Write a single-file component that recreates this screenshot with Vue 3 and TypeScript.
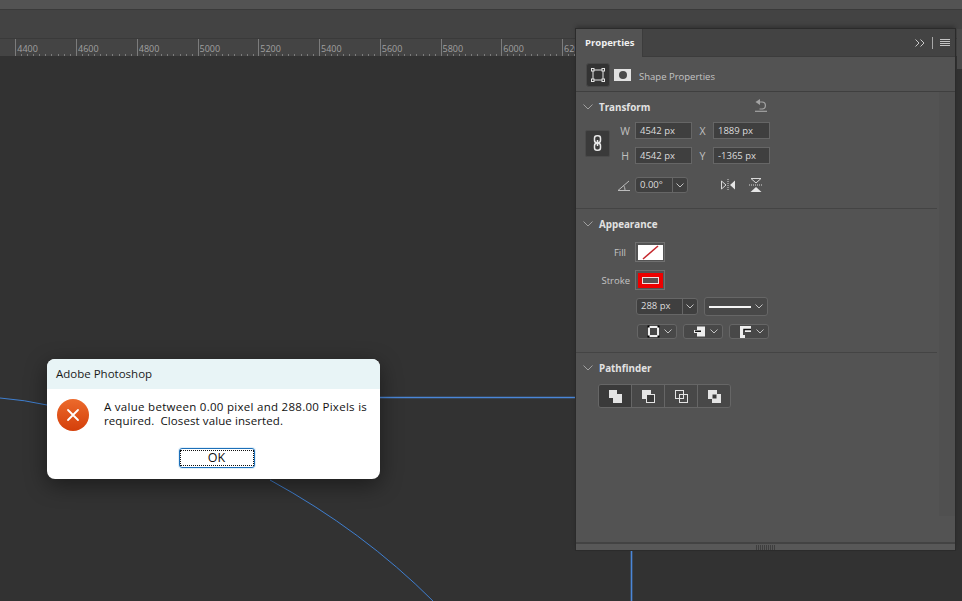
<template>
  <div class="workspace">
    <div class="top-strip"></div>
    <div class="options-bar"></div>
    <div class="ruler">
      <div v-for="mark in rulerMarks" :key="mark" class="ruler-cell">
        <span>{{ mark }}</span>
      </div>
    </div>

    <main class="canvas">
      <!-- paths on the document canvas -->
      <svg class="canvas-paths" width="962" height="601" viewBox="0 0 962 601" fill="none">
        <path d="M0 398 Q25 400 47 405" />
        <path d="M270 480 Q363 531 433 601" />
        <path class="straight" d="M380 397.500 H576" />
        <path class="straight" d="M631.500 550 V601" />
      </svg>
    </main>

    <aside class="panel">
      <header class="panel-tabs">
        <div class="tab">Properties</div>
        <div class="tab-rest">
          <svg width="10" height="8" viewBox="0 0 10 8" fill="none" stroke="#c8c8c8">
            <path d="M.5.5L4 4 .5 7.500M5.500.5L9 4 5.500 7.500" />
          </svg>
          <i class="tab-sep"></i>
          <span class="burger"><i></i><i></i><i></i><i></i></span>
        </div>
      </header>

      <div class="shape-row">
        <button class="shape-btn">
          <svg width="14" height="14" viewBox="0 0 14 14" fill="none" stroke="#e6e6e6">
            <rect x="2" y="2" width="10" height="10" />
            <rect x=".5" y=".5" width="2.500" height="2.500" fill="#333" />
            <rect x="11" y=".5" width="2.500" height="2.500" fill="#333" />
            <rect x=".5" y="11" width="2.500" height="2.500" fill="#333" />
            <rect x="11" y="11" width="2.500" height="2.500" fill="#333" />
          </svg>
        </button>
        <span class="mask-thumb"><i></i></span>
        <span class="shape-label">Shape Properties</span>
      </div>

      <div class="panel-body">
        <div class="sections">
          <section class="section transform">
            <div class="section-head">
              <svg class="chev" width="10" height="6" viewBox="0 0 10 6" fill="none"><path d="M.5.5L5 5 9.500.5" /></svg>
              <h3>Transform</h3>
              <svg class="reset" width="14" height="13" viewBox="0 0 14 13" fill="none" stroke="#a4a4a4" stroke-width="1.200">
                <path d="M6 0L1.500 3 6 6z" fill="#a4a4a4" stroke="none" />
                <path d="M5 3H8a3.500 3.500 0 0 1 3.400 3.500A3.500 3.500 0 0 1 8 10H5.500" />
                <path d="M1 12.300H13" />
              </svg>
            </div>
            <div class="transform-grid">
              <button class="link-btn">
                <svg width="9" height="16" viewBox="0 0 9 16" fill="none" stroke="#e8e8e8" stroke-width="1.500">
                  <rect x="1.500" y=".8" width="6" height="7" rx="2.500" />
                  <rect x="1.500" y="8.200" width="6" height="7" rx="2.500" />
                  <path d="M4.500 5v6" />
                </svg>
              </button>
              <div class="size-fields">
                <template v-for="field in sizeFields" :key="field.label">
                  <label>{{ field.label }}</label>
                  <span class="input">{{ field.value }}</span>
                </template>
              </div>
            </div>
            <div class="angle-row">
              <svg class="angle-icon" width="14" height="11" viewBox="0 0 14 11" fill="none" stroke="#bcbcbc">
                <path d="M13 10.500H1L12 1M8 10.500C8 8.500 7.500 6.500 6.500 5.500" />
              </svg>
              <span class="combo angle-combo"><span class="combo-text">0.00°</span><span class="combo-arrow"><svg class="chev small" width="8" height="5" viewBox="0 0 8 5" fill="none"><path d="M.5.5L4 4 7.500.5" /></svg></span></span>
              <svg class="flip-h" width="16" height="12" viewBox="0 0 16 12">
                <path d="M1.500 2L6 6l-4.500 4z" fill="none" stroke="#d8d8d8" />
                <path d="M15 1.500v9L10 6z" fill="#e6e6e6" />
                <path d="M8 0v12" stroke="#d8d8d8" stroke-dasharray="1 1" />
              </svg>
              <svg class="flip-v" width="14" height="16" viewBox="0 0 14 16">
                <path d="M2 1.500h10L7 6z" fill="none" stroke="#d8d8d8" />
                <path d="M1.500 15h11L7 10z" fill="#e6e6e6" />
                <path d="M0 8h14" stroke="#d8d8d8" stroke-dasharray="1 1" />
              </svg>
            </div>
          </section>

          <section class="section appearance">
            <div class="section-head">
              <svg class="chev" width="10" height="6" viewBox="0 0 10 6" fill="none"><path d="M.5.5L5 5 9.500.5" /></svg>
              <h3>Appearance</h3>
            </div>
            <div class="swatch-row">
              <label class="fill-label">Fill</label>
              <span class="swatch-frame">
                <svg width="25" height="15" viewBox="0 0 25 15"><rect width="25" height="15" fill="#fff" /><path d="M5 14L20 1" stroke="#c4262c" stroke-width="1.500" /></svg>
              </span>
            </div>
            <div class="swatch-row">
              <label>Stroke</label>
              <span class="swatch-frame">
                <svg width="25" height="15" viewBox="0 0 25 15"><rect width="25" height="15" fill="#ed0000" /><rect x="4.500" y="4.500" width="16" height="6" fill="#5a5050" stroke="#f0e0e0" /></svg>
              </span>
            </div>
            <div class="stroke-row">
              <span class="combo width-combo"><span class="combo-text">288 px</span><span class="combo-arrow"><svg class="chev small" width="8" height="5" viewBox="0 0 8 5" fill="none"><path d="M.5.5L4 4 7.500.5" /></svg></span></span>
              <span class="combo line-combo"><i class="line-sample"></i><svg class="chev small" width="8" height="5" viewBox="0 0 8 5" fill="none"><path d="M.5.5L4 4 7.500.5" /></svg></span>
            </div>
            <div class="align-row">
              <span class="mini-combo">
                <svg width="13" height="13" viewBox="0 0 13 13" fill="none" stroke="#f0f0f0"><rect x="2" y="2" width="9" height="9" stroke-width="2" /><rect x=".5" y=".5" width="2" height="2" fill="#000" stroke="none" /><rect x="10.500" y=".5" width="2" height="2" fill="#000" stroke="none" /><rect x=".5" y="10.500" width="2" height="2" fill="#000" stroke="none" /><rect x="10.500" y="10.500" width="2" height="2" fill="#000" stroke="none" /></svg>
                <svg class="chev small" width="8" height="5" viewBox="0 0 8 5" fill="none"><path d="M.5.5L4 4 7.500.5" /></svg>
              </span>
              <span class="mini-combo">
                <svg width="13" height="13" viewBox="0 0 13 13"><path d="M4 1.500h8v10H4V8H1V5h3z" fill="#eee" /><rect x="2" y="5.500" width="6" height="1.500" fill="#111" /></svg>
                <svg class="chev small" width="8" height="5" viewBox="0 0 8 5" fill="none"><path d="M.5.5L4 4 7.500.5" /></svg>
              </span>
              <span class="mini-combo">
                <svg width="13" height="13" viewBox="0 0 13 13"><path d="M1 1h11v6H6v6H1z" fill="#eee" /><path d="M12 4.500H5V10" fill="none" stroke="#111" stroke-width="1.500" /></svg>
                <svg class="chev small" width="8" height="5" viewBox="0 0 8 5" fill="none"><path d="M.5.5L4 4 7.500.5" /></svg>
              </span>
            </div>
          </section>

          <section class="section pathfinder">
            <div class="section-head">
              <svg class="chev" width="10" height="6" viewBox="0 0 10 6" fill="none"><path d="M.5.5L5 5 9.500.5" /></svg>
              <h3>Pathfinder</h3>
            </div>
            <div class="path-group">
              <button class="path-btn">
                <svg width="15" height="15" viewBox="0 0 15 15"><path d="M1 1h8v4h5v9H5V9H1z" fill="#e4e4e4" /></svg>
              </button>
              <button class="path-btn">
                <svg width="15" height="15" viewBox="0 0 15 15"><rect x="1" y="1" width="9" height="9" fill="#e4e4e4" /><rect x="5.500" y="5.500" width="8" height="8" fill="#3a3a3a" stroke="#e4e4e4" /></svg>
              </button>
              <button class="path-btn">
                <svg width="15" height="15" viewBox="0 0 15 15" fill="none" stroke="#e4e4e4"><rect x="1.500" y="1.500" width="8" height="8" /><rect x="5.500" y="5.500" width="8" height="8" /></svg>
              </button>
              <button class="path-btn">
                <svg width="15" height="15" viewBox="0 0 15 15"><path d="M1 1h9v4h4v9H5v-4H1z" fill="#e4e4e4" /><rect x="5.500" y="5.500" width="4" height="4" fill="#3a3a3a" /></svg>
              </button>
            </div>
          </section>
        </div>
        <div class="scroll-track"><div class="scroll-thumb"></div></div>
      </div>

      <footer class="panel-foot">
        <span class="gripper"></span>
      </footer>
    </aside>

    <div class="dock-edge"></div>

    <div class="dialog" role="alertdialog">
      <div class="dialog-title">Adobe Photoshop</div>
      <div class="dialog-body">
        <span class="error-icon">
          <svg width="14" height="14" viewBox="0 0 14 14" fill="none" stroke="#fff" stroke-width="1.800" stroke-linecap="round">
            <path d="M2 2l10 10M12 2L2 12" />
          </svg>
        </span>
        <p>
          <span class="line-one">A value between 0.00 pixel and 288.00 Pixels is</span>
          <span class="line-two">required.&nbsp; Closest value inserted.</span>
        </p>
      </div>
      <div class="dialog-actions">
        <button class="ok-btn"><span>OK</span></button>
      </div>
    </div>
  </div>
</template>

<script setup lang="ts">
interface SizeField {
  label: string
  value: string
}

const rulerMarks: string[] = ['4400', '4600', '4800', '5000', '5200', '5400', '5600', '5800', '6000', '6200']

const sizeFields: SizeField[] = [
  { label: 'W', value: '4542 px' },
  { label: 'X', value: '1889 px' },
  { label: 'H', value: '4542 px' },
  { label: 'Y', value: '-1365 px' }
]
</script>

<style>
html,
body {
  margin: 0;
  background: #323232;
  overflow: hidden;
}
</style>

<style scoped>
.workspace {
  position: relative;
  display: flex;
  flex-direction: column;
  width: 962px;
  height: 601px;
  overflow: hidden;
  background: #323232;
  font-family: "Open Sans", "Noto Sans", sans-serif;
}

.top-strip {
  height: 9px;
  background: #535353;
  border-bottom: 1px solid #3a3a3a;
}

.options-bar {
  height: 28px;
  background: #434343;
  border-bottom: 1px solid #3a3a3a;
}

/* ========= ruler ========= */
.ruler {
  display: flex;
  height: 17px;
  padding-left: 15.300px;
  background: #444444;
  overflow: hidden;
}

.ruler-cell {
  flex: 0 0 60.750px;
  box-sizing: border-box;
  padding-left: 1px;
  border-left: 1px solid #7c7c7c;
  font-size: 9px;
  color: #a0a0a0;
  background:
    repeating-linear-gradient(90deg, transparent 0, transparent 5.080px, #7c7c7c 5.080px, #7c7c7c 6.080px) bottom left / 100% 2px no-repeat;
}

.ruler-cell:last-child {
  flex-basis: 14px;
}

.ruler-cell span {
  display: block;
  height: 17px;
  line-height: 19px;
  overflow: hidden;
  white-space: nowrap;
}

.canvas {
  flex: 1;
}

.canvas-paths {
  position: absolute;
  inset: 0;
  stroke: #3f7fd0;
  stroke-width: 1;
}

.canvas-paths .straight {
  stroke: #4a86d8;
  stroke-width: 1.600;
}

/* ========= panel ========= */
.panel {
  position: absolute;
  top: 29px;
  left: 576px;
  width: 379px;
  height: 521px;
  display: flex;
  flex-direction: column;
  background: #535353;
  box-shadow: 0 0 0 1px #2b2b2b, 0 -3px 4px rgba(0, 0, 0, 0.25);
  font-size: 9.500px;
  color: #c6c6c6;
}

.panel-tabs {
  display: flex;
  height: 28px;
  flex-shrink: 0;
}

.tab {
  width: 66px;
  padding-left: 9px;
  box-sizing: border-box;
  line-height: 27px;
  font-weight: 700;
  font-size: 9.500px;
  color: #f0f0f0;
  background: #535353;
}

.tab-rest {
  flex: 1;
  display: flex;
  align-items: center;
  justify-content: flex-end;
  gap: 7px;
  padding-right: 5px;
  background: #434343;
  border-bottom: 1px solid #3c3c3c;
  border-left: 1px solid #3c3c3c;
}

.tab-sep {
  width: 1px;
  height: 12px;
  background: #a8a8a8;
}

.burger {
  display: flex;
  flex-direction: column;
  gap: 1px;
  width: 10px;
}

.burger i {
  height: 1px;
  background: #c4c4c4;
}

.shape-row {
  display: flex;
  align-items: center;
  height: 35px;
  padding: 1px 0 0 10px;
  flex-shrink: 0;
  border-bottom: 1px solid #3f3f3f;
  box-sizing: border-box;
}

.shape-btn {
  display: flex;
  align-items: center;
  justify-content: center;
  width: 24px;
  height: 24px;
  padding: 0;
  background: #333333;
  border: 1px solid #484848;
  border-radius: 3px;
}

.mask-thumb {
  display: flex;
  align-items: center;
  justify-content: center;
  width: 17px;
  height: 12px;
  margin-left: 4px;
  background: #e2e2e2;
}

.mask-thumb i {
  width: 8px;
  height: 8px;
  border-radius: 50%;
  background: #4a4a4a;
}

.shape-label {
  margin: 3px 0 0 8px;
  color: #c4c4c4;
}

.panel-body {
  flex: 1;
  display: flex;
  min-height: 0;
}

.sections {
  width: 361px;
  flex-shrink: 0;
}

.scroll-track {
  flex: 1;
  margin-left: 2px;
}

.scroll-thumb {
  height: 424px;
  background: #505050;
}

.section {
  box-sizing: border-box;
  border-bottom: 1px solid #444444;
}

.section.pathfinder {
  border-bottom: 0;
}

.section.transform {
  height: 117px;
}

.section.appearance {
  height: 144px;
}

.section-head {
  display: flex;
  align-items: center;
  height: 30px;
  padding-left: 7px;
}

.appearance .section-head {
  margin-bottom: 3px;
}

.section-head h3 {
  margin: 0 0 0 6px;
  font-size: 9.800px;
  font-weight: 700;
  color: #e2e2e2;
}

.chev {
  stroke: #a0a0a0;
  flex-shrink: 0;
}

.reset {
  margin-left: 104px;
  margin-top: -4px;
}

.transform-grid {
  display: flex;
  align-items: center;
  height: 42px;
  padding-left: 9px;
}

.link-btn {
  display: flex;
  align-items: center;
  justify-content: center;
  width: 25px;
  height: 27px;
  padding: 0;
  background: #3a3a3a;
  border: 1px solid #4a4a4a;
  border-radius: 2px;
}

.size-fields {
  display: grid;
  grid-template-columns: 20px 57px 21px 57px;
  grid-auto-rows: 17px;
  row-gap: 8px;
  margin-left: 5px;
  align-items: center;
}

.size-fields label {
  color: #c0c0c0;
  font-size: 10.500px;
  text-align: center;
}

.input {
  display: block;
  box-sizing: border-box;
  height: 17px;
  padding-left: 4px;
  line-height: 15px;
  background: #3f3f3f;
  border: 1px solid #666666;
  color: #dcdcdc;
}

.angle-row {
  display: flex;
  align-items: center;
  height: 16px;
  margin-top: 13px;
  padding-left: 41px;
}

.combo {
  display: flex;
  align-items: center;
  box-sizing: border-box;
  height: 16px;
  background: #3f3f3f;
  border: 1px solid #666666;
  border-radius: 3px;
  color: #dcdcdc;
}

.combo-text {
  flex: 1;
  height: 100%;
  padding-left: 4px;
  line-height: 14px;
  border-right: 1px solid #666666;
}

.combo-arrow {
  display: flex;
  align-items: center;
  justify-content: center;
  width: 14px;
}

.chev.small {
  stroke: #c2c2c2;
}

.angle-combo {
  width: 53px;
  margin-left: 4px;
}

.flip-h {
  margin-left: 32px;
}

.flip-v {
  margin-left: 13px;
}

.swatch-row {
  display: flex;
  align-items: center;
  height: 20px;
  margin-bottom: 8px;
}

.swatch-row label {
  flex: 0 0 54px;
  text-align: right;
  color: #c4c4c4;
}

.swatch-row .fill-label {
  padding-right: 4px;
  box-sizing: border-box;
}

.swatch-frame {
  display: flex;
  align-items: center;
  justify-content: center;
  width: 30px;
  height: 20px;
  margin-left: 5px;
  border: 1px solid #707070;
  box-sizing: border-box;
}

.stroke-row {
  display: flex;
  align-items: center;
  gap: 6px;
  padding-left: 60px;
  margin-top: -1px;
}

.width-combo {
  width: 62px;
  height: 17px;
}

.line-combo {
  width: 64px;
  height: 19px;
  padding: 0 4px;
  gap: 4px;
  background: #484848;
}

.line-sample {
  flex: 1;
  height: 2px;
  background: #f4f4f4;
}

.align-row {
  display: flex;
  gap: 6px;
  padding-left: 61px;
  margin-top: 8px;
}

.mini-combo {
  display: flex;
  align-items: center;
  justify-content: space-between;
  box-sizing: border-box;
  width: 40px;
  height: 15px;
  padding: 0 4px 0 9px;
  background: #484848;
  border: 1px solid #666666;
  border-radius: 3px;
}

.path-group {
  display: flex;
  box-sizing: border-box;
  width: 133px;
  height: 24px;
  margin: 1px 0 0 22px;
  border: 1px solid #666666;
  border-radius: 3px;
  overflow: hidden;
}

.path-btn {
  flex: 1;
  display: flex;
  align-items: center;
  justify-content: center;
  padding: 0;
  border: 0;
  border-left: 1px solid #666666;
  background: #484848;
}

.path-btn:first-child {
  border-left: 0;
  background: #3a3a3a;
}

.panel-foot {
  display: flex;
  justify-content: center;
  align-items: center;
  height: 8px;
  flex-shrink: 0;
  background: #585858;
  border-top: 2px solid #434343;
  box-sizing: border-box;
}

.gripper {
  width: 19px;
  height: 5px;
  background: repeating-linear-gradient(90deg, #3e3e3e 0, #3e3e3e 1px, transparent 1px, transparent 2px);
}

.dock-edge {
  position: absolute;
  top: 29px;
  right: 0;
  width: 5px;
  height: 40px;
  background: #4a4a4a;
}

/* ========= dialog ========= */
.dialog {
  position: absolute;
  top: 359px;
  left: 47px;
  width: 333px;
  height: 120px;
  display: flex;
  flex-direction: column;
  border-radius: 8px;
  background: #ffffff;
  overflow: hidden;
  box-shadow: 0 6px 22px rgba(0, 0, 0, 0.45);
  color: #111111;
}

.dialog-title {
  height: 30px;
  padding-left: 9px;
  line-height: 30px;
  font-size: 11.500px;
  background: #e8f4f6;
  color: #1a1a1a;
}

.dialog-body {
  display: flex;
  align-items: flex-start;
  height: 53px;
  padding: 10px 0 0 10px;
  box-sizing: border-box;
}

.error-icon {
  display: flex;
  align-items: center;
  justify-content: center;
  width: 32px;
  height: 32px;
  flex-shrink: 0;
  border-radius: 50%;
  background: linear-gradient(180deg, #ec6a2c, #d43f0a);
}

.dialog-body p {
  margin: 0 0 0 15px;
  padding-top: 1px;
  font-size: 11.500px;
  line-height: 14px;
  white-space: nowrap;
}

.dialog-body p span {
  display: block;
}

.line-one {
  letter-spacing: 0.285px;
}

.line-two {
  letter-spacing: 0.1px;
}

.dialog-actions {
  display: flex;
  justify-content: center;
  padding-top: 6px;
}

.ok-btn {
  display: flex;
  align-items: center;
  justify-content: center;
  box-sizing: border-box;
  width: 76px;
  height: 20px;
  margin-left: 6px;
  padding: 1px;
  background: #ffffff;
  border: 1px solid #1d6fb8;
  border-radius: 3px;
  box-shadow: 0 0 0 1px #e2f0fa;
  font-family: inherit;
  font-size: 12.500px;
  color: #111111;
}

.ok-btn span {
  display: block;
  width: 100%;
  line-height: 14px;
  outline: 1px dotted #111111;
  outline-offset: 0;
}
</style>
